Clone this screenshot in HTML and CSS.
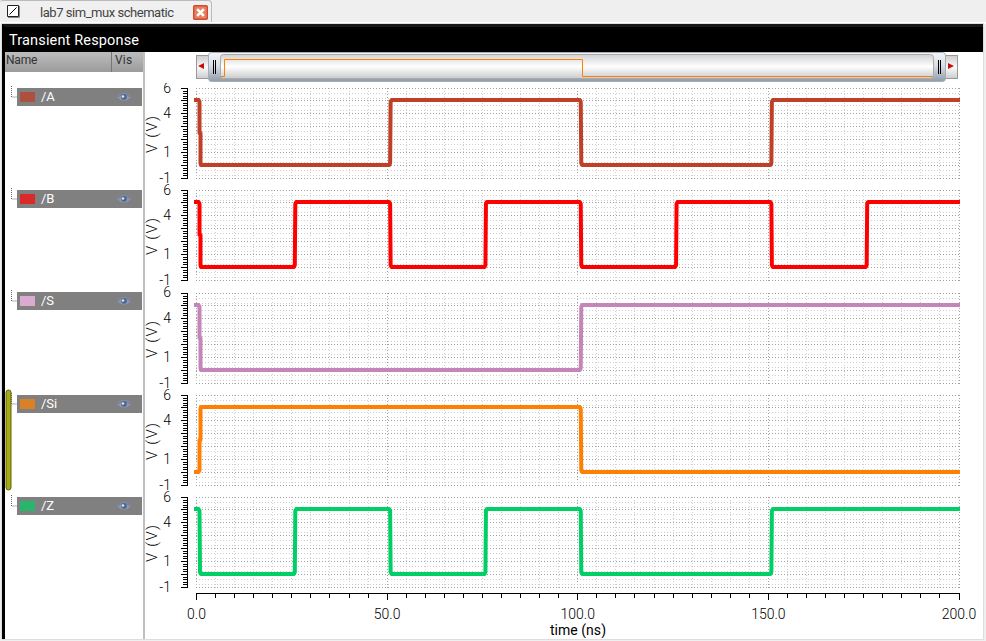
FILE: index.html
```
<!DOCTYPE html>
<html lang="en">
<head><meta charset="utf-8"><title>Transient Response</title><link rel="stylesheet" href="styles.css"></head>
<body>
<header class="tabs"><div class="tab">
<svg class="doc" width="15" height="16" viewBox="0 0 15 16"><path d="M.5 .5H11.500V11.500H.5Z" fill="#fff" stroke="#222"/><path d="M2.500 9.500L9.500 2.500" stroke="#000"/><path d="M12.500 1V12.500H1" fill="none" stroke="#888"/></svg>
<span class="tab-title"><svg width="136" height="20"><text x="0" y="12" textLength="134">lab7 sim_mux schematic</text></svg></span>
<svg class="close" width="15" height="15" viewBox="0 0 15 15"><rect x=".7" y=".7" width="13.6" height="13.6" rx="1" fill="#e58061" stroke="#d04b32" stroke-width="1.4"/><path d="M4.2 4.2L10.8 10.8M10.8 4.2L4.2 10.8" stroke="#fff" stroke-width="2.6"/></svg>
</div></header>
<main class="window">
<h1><svg width="140" height="24"><text x="0" y="18" textLength="130">Transient Response</text></svg></h1>
<div class="content">
<aside><div class="columns"><span class="name">Name</span><span class="vis">Vis</span></div><div class="signals" id="signals"></div></aside>
<section class="graph">
<svg class="range" width="841" height="31" viewBox="145 52 841 31">
<defs><linearGradient id="knob" x2="0" y2="1"><stop stop-color="#f3f6fa"/><stop offset=".45" stop-color="#d9dfe5"/><stop offset="1" stop-color="#8f9baa"/></linearGradient><linearGradient id="track" x2="0" y2="1"><stop stop-color="#d2d2d2"/><stop offset=".5" stop-color="#fff"/><stop offset="1" stop-color="#cbcbcb"/></linearGradient><linearGradient id="button" x2="0" y2="1"><stop stop-color="#ccc"/><stop offset=".5" stop-color="#fafafa"/><stop offset="1" stop-color="#ccc"/></linearGradient></defs>
<rect x="196.5" y="55.5" width="761" height="23" fill="url(#button)" stroke="#999"/>
<rect x="208.500" y="52.500" width="737" height="29" rx="3" fill="url(#knob)" stroke="#a5afba"/>
<rect x="220.500" y="54.500" width="713" height="24" rx="3" fill="url(#track)" stroke="#aaa"/>
<path d="M221 76.500H224.500V59.500H582.500V76.500H933" fill="none" stroke="#ff8000"/>
<path d="M213.500 60V74M215.500 60V74M938.500 60V74M940.500 60V74" stroke="#000"/><path d="M198 66L204 63V69ZM954 66L948 63V69Z" fill="#cc0c0c"/>
</svg>
<svg id="plots" class="plots" width="841" height="555" viewBox="145 83 841 555"></svg>
</section>
</div>
</main>
<script src="plot.js"></script>
</body></html>
```
FILE: styles.css
```
*{box-sizing:border-box}
body{margin:0;width:986px;height:641px;background:#efefef;overflow:hidden;font:13px Roboto,"Liberation Sans",sans-serif}
svg{display:block;flex-shrink:0}
.tabs{height:24px;border-bottom:2px solid #fff}
.tab{display:flex;width:212px;height:22px;padding:4px 0 0 7px;border:1px solid #bbb;border-width:1px 1px 0 0;border-radius:3px 4px 0 0;background:#f0f0f0;align-items:flex-start}
.tab-title{margin-left:18px;width:153px;fill:#444}
.window{margin-left:2px;width:981px;height:615px;border-top:3px solid #171717;border-left:3px solid #000;background:#fff;outline:1px solid #ddd}
.window h1{display:flex;margin:0;height:25px;padding-left:4px;background:#000;fill:#fff;font-size:14.5px;font-weight:400}
.content{display:flex}
aside{width:140px;height:587px;border-right:2px solid #c0c0c0;flex-shrink:0}
.columns{display:flex;height:20px;background:linear-gradient(#bdbdbd,#9b9b9b);color:#333;font-size:12px;line-height:16px}
.name{width:107px;padding-left:1px;border-right:1px solid #777;letter-spacing:-.2px}
.vis{padding-left:3px;letter-spacing:.2px}
.signals{padding-top:11px}
.graph{width:838px;overflow:hidden}
.plots{font-family:Roboto,"Liberation Sans",sans-serif;font-size:14px}
.grid{shape-rendering:crispEdges;stroke-dasharray:1 2}
.axis{shape-rendering:crispEdges;stroke:#000;fill:none}
.wave{fill:none;stroke-width:4;stroke-linejoin:round}
```
FILE: plot.js
```
const names = ['/A', '/B', '/S', '/Si', '/Z'];
const tops = [88, 190, 292, 395, 497];
const colors = ['#bf4026', '#f00', '#c585b8', '#ff8000', '#00cf66'];
const chips = ['#ae503f', '#da2929', '#daaad0', '#da8026', '#28b66c'];
// Times in ns at which each signal changes level.
const edges = [[0, 50, 100, 150], [0, 25, 50, 75, 100, 125, 150, 175], [0, 100], [0, 100], [0, 25, 50, 75, 100, 150]];
const major = [0, 12, 25, 38, 51, 64, 77, 90];
const x = t => 196 + t * 3.8125;
const n = v => Math.round(v) + .5;
let out = '';
let side = '<svg width="137" height="555" viewBox="5 83 137 555"><rect x="6" y="390" width="5" height="100" rx="2.5" fill="#a6ac10" stroke="#5d600a"/>';

tops.forEach((row, i) => {
  const top = i === 2 ? row + 1 : row;
  for (let t = 0; t <= 200; t += 5) {
    out += `<path class="grid" stroke="${t % 50 ? '#d0d0d0' : '#a0a0a0'}" d="M${n(x(t))} ${top}V${top + 91}"/>`;
  }
  let ticks = '';
  for (let j = 0; j < 8; j++) {
    const y = top + major[j];
    out += `<path class="grid" stroke="#a0a0a0" d="M196 ${y + .5}H960"/>`;
    ticks += `M181 ${y + .5}H188`;
    if (j < 7) {
      for (const a of [5, 10]) out += `<path class="grid" stroke="#cdcdcd" d="M196 ${y + a + .5}H960"/>`;
      for (let a = 1; a < 5; a++) ticks += `M183 ${Math.round(y + a * 2.57) + .5}H188`;
    }
  }
  out += `<path class="axis" d="M187.500 ${top}V${top + 91}${ticks}"/>`;
  [[6, 0], [4, 25], [1, 64], [-1, 90]].forEach(([v, y]) => {
    const base = (y === 0 ? row : top) + y + 5;
    out += `<text x="171" text-anchor="end" font-weight="300" y="${base}">${v < 0 ? '-1' : v}</text>`;
  });
  out += `<text transform="translate(157 ${top + 65}) rotate(-90)" font-weight="300" font-size="15" textLength="37">V (V)</text>`;

  let hi = i !== 3;
  let d = `M194 ${top + (hi ? 12 : 77)}`;
  edges[i].forEach((t, k) => {
    const p = x(t) + 3;
    const y = top + (hi ? 12 : 77);
    const z = top + (hi ? 77 : 12);
    const s = hi ? 2 : -2;
    d += `H${p - .5}L${p + .5} ${y + s}`;
    d += k === 0 && i !== 4 ? `V${top + 45}H${p + 1.5}V${z - s}` : `L${p + 1} ${z - s}`;
    d += `L${p + 2} ${z}`;
    hi = !hi;
  });
  out += `<path class="wave" stroke="${colors[i]}" d="${d}H960"/>`;

  side += `<path d="M11.500 ${row - 2}V${row + 9}H17" fill="none" stroke="#666" stroke-dasharray="1 1"/><rect x="17" y="${row}" width="125" height="18" fill="#808080"/><rect x="20" y="${row + 4}" width="15" height="10" fill="${chips[i]}"/><text x="41" y="${row + 13}" fill="#fff">${names[i]}</text><path d="M117 ${row + 9}q7-8 14 0q-7 7-14 0" fill="#8b9ab5"/><path d="M118 ${row + 9}q6-6 12 0" fill="none" stroke="#6478a0"/><circle cx="124" cy="${row + 9}" r="2.800" fill="#506488"/><circle cx="123" cy="${row + 8.5}" r="1.300" fill="#dfe6f0"/>`;
});

let ax = 'M196.500 599V593.500H959V599';
for (let t = 0; t <= 200; t += 5) {
  ax += `M${n(x(t))} 593V${t % 50 ? 598 : 600}`;
  if (t % 50 === 0) out += `<text x="${x(t) + .5}" y="619" text-anchor="middle" font-weight="300">${t.toFixed(1)}</text>`;
}
out += `<path class="axis" d="${ax}"/><text x="550" y="635" textLength="56">time (ns)</text>`;
document.querySelector('#plots').innerHTML = out;
document.querySelector('#signals').innerHTML = side + '</svg>';
```
